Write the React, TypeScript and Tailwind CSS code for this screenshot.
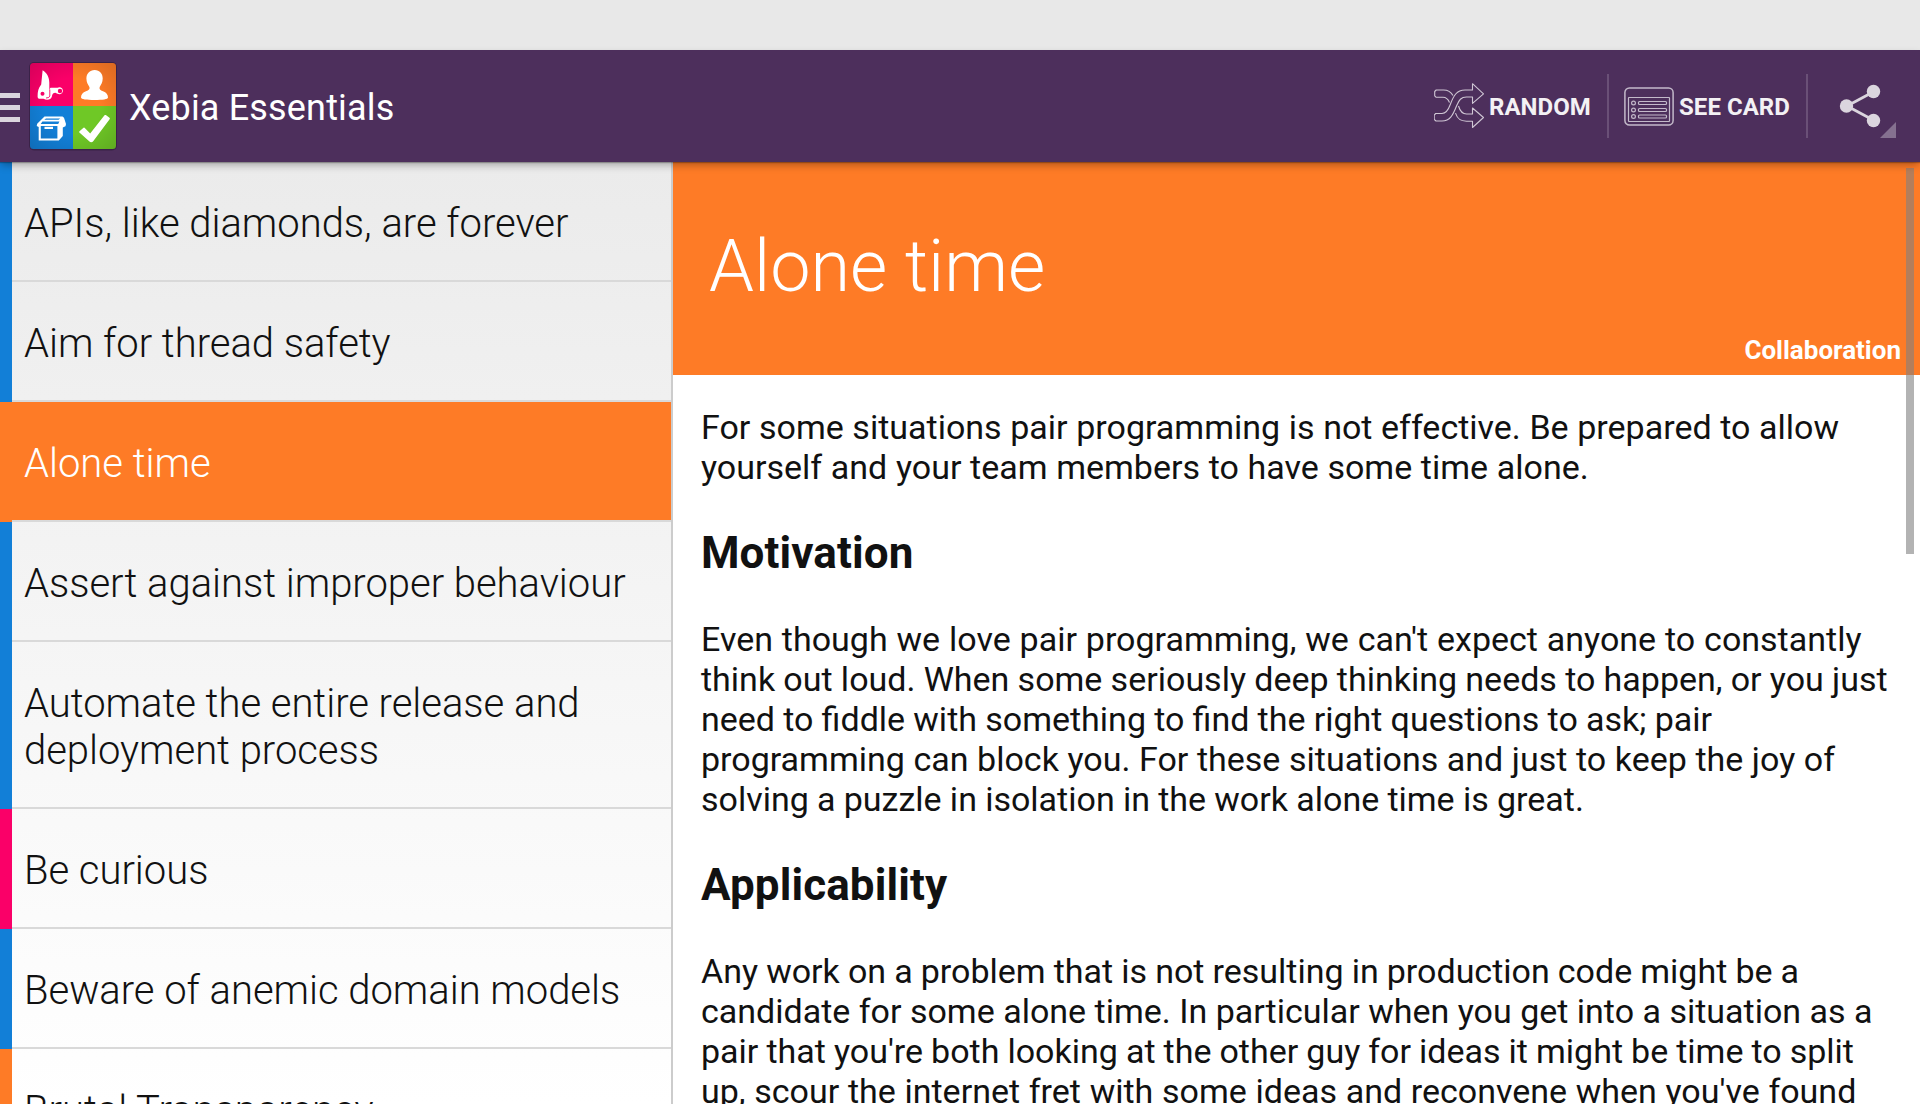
const BLUE = 'bg-[#127fd7]';
const PINK = 'bg-[#fa0068]';
const ORANGE = 'bg-[#fe7b26]';

const ITEMS: { title: string; bar: string; selected?: boolean }[] = [
  { title: 'APIs, like diamonds, are forever', bar: BLUE },
  { title: 'Aim for thread safety', bar: BLUE },
  { title: 'Alone time', bar: ORANGE, selected: true },
  { title: 'Assert against improper behaviour', bar: BLUE },
  { title: 'Automate the entire release and deployment process', bar: BLUE },
  { title: 'Be curious', bar: PINK },
  { title: 'Beware of anemic domain models', bar: BLUE },
  { title: 'Brutal Transparency', bar: ORANGE },
];

function Logo() {
  return (
    <svg className="h-[90px] w-[90px] shrink-0" viewBox="0 0 90 90">
      <defs>
        <clipPath id="tile"><rect x="2" y="2" width="86" height="86" rx="3.5" /></clipPath>
        <radialGradient id="shade" cx="0.5" cy="0.5" r="0.72">
          <stop offset="0.45" stopColor="#000" stopOpacity="0" />
          <stop offset="1" stopColor="#000" stopOpacity="0.15" />
        </radialGradient>
      </defs>
      <rect x="1" y="1" width="88" height="88.5" rx="5" fill="#2f1a3a" opacity="0.6" />
      <g clipPath="url(#tile)">
        <rect x="2" y="2" width="43" height="43" fill="#fa0068" />
        <rect x="45" y="2" width="43" height="43" fill="#fe7b26" />
        <rect x="2" y="45" width="43" height="43" fill="#127fd7" />
        <rect x="45" y="45" width="43" height="43" fill="#6fc826" />
        <rect x="2" y="2" width="86" height="86" fill="url(#shade)" />
      </g>
      <path fill="#fff" fillRule="evenodd" d="M14.6 9.3c4.2 2.3 6.7 7 6.7 12.200v8.300c.5-2.600 1-3 2-3h6.200a3.500 3.500 0 1 1 1 6.300c-1.300-.3-2.200-.9-3-1.300c-2.500.2-3.300 1-3.700 4c-.7 3-5.200 3.600-8.300 1.900H12c-1.600 0-2.400-.7-2.400-2.300c0-5 .7-8.400 3.600-12zM14.500 30.700a2 2 0 1 0 0 4a2 2 0 1 0 0-4zM32 27.800a2.200 2.200 0 1 0 0 4.400a2.200 2.200 0 1 0 0-4.400z" />
      <path fill="none" stroke="#fa0068" strokeWidth="0.900" d="M21.800 28.500v6.500q-.3 2-3.800 2" />
      <path fill="#fff" d="M66.700 9c5 0 8 3.600 8 8.500c0 4.300-1.800 6.300-3 8.500c-.8 2 .5 3.300 3.300 4.300c3.300 1.200 5 3.200 5 6.200c0 1.800-5.400 2.500-13.400 2.500s-13.600-.7-13.600-2.500c0-3 1.700-5 5-6.200c2.800-1 4.200-2.300 3.400-4.300c-1.200-2.200-3-4.200-3-8.500c0-4.900 3.300-8.500 8.300-8.500z" />
      <path
        fill="#fff"
        fillRule="evenodd"
        d="M16.500 55.500h18l1.500 1.200l2 6.300l-.5 2.200l-2.700 1.300v8.500l-4 4.500H10.700v-13.500l-2-1l.5-2.300zM18 57.600l-1.700 1.200h14.200l1.700-1.200zM14.400 60.500l-1.700 2.500h17.500l1.200-2.500zM12.800 65v12.400h16.600v-12.400z"
      />
      <path fill="#fff" d="M16.500 65.800h8.500v2.200h-8.500z" />
      <path fill="#fff" d="M51.500 70.200l4-3.400a1 1 0 0 1 1.300.1l5.400 5.600l14.300-18.200a1 1 0 0 1 1.300-.2l3.700 2.700a1 1 0 0 1 .1 1.400l-16.400 22a2.600 2.600 0 0 1-4 .1l-9.800-8.700a1 1 0 0 1 .1-1.400z" />
    </svg>
  );
}

function ShuffleIcon() {
  return (
    <svg className="h-[46px] w-[50px] shrink-0" viewBox="0 0 50 46" fill="none" stroke="#cfc6d4" strokeWidth="1.1" strokeLinejoin="round">
      <path d="M15.500 19.500c-1.500-3.500-3.500-5.200-6.500-5.200h-6.800l-1.500-1.500v-4.300l1.500-1.500h7.300c4.500 0 7.500 2 9.500 5.500" />
      <path d="M38.500 7v-6.300l11 10.100l-11 9.500v-6.300h-6c-5.500 0-7.500 3-10 9c-3.500 9-6.500 15-14.500 15h-6l-1.800-1.500v-4.500l1.500-1.500h6.300c4.500 0 6.500-4 8.500-9.500c3-8 6-14 14.500-14z" />
      <path d="M24.500 23c1.500 5 4 8 8 8h6v-6l11 9.500l-11 10v-6.300h-6c-6 0-9-2-11-8" />
    </svg>
  );
}

function CardIcon() {
  return (
    <svg className="h-[39px] w-[50px] shrink-0" viewBox="0 0 50 39" fill="none" stroke="#c3b9ca" strokeWidth="1.2">
      <rect x="0.900" y="0.900" width="48.200" height="37.200" rx="4.500" strokeWidth="1.500" />
      <rect x="4.500" y="10.500" width="41" height="24" rx="0.500" />
      {[16, 23, 29.500].map((y) => (
        <g key={y}>
          <circle cx="9.500" cy={y} r="1.900" />
          <rect x="14.500" y={y - 1.500} width="28" height="3" rx="1" />
        </g>
      ))}
    </svg>
  );
}

function ShareIcon() {
  return (
    <svg className="h-[44px] w-[42px]" viewBox="0 0 42 44">
      <path d="M35 7.500L8 22l27 14.500" fill="none" stroke="#dbd5de" strokeWidth="2.800" />
      <circle cx="34.500" cy="7.500" r="6.700" fill="#dbd5de" />
      <circle cx="7.500" cy="22" r="6.700" fill="#dbd5de" />
      <circle cx="34.500" cy="36.500" r="6.700" fill="#dbd5de" />
    </svg>
  );
}

function Divider() {
  return <div className="h-16 w-0.5 shrink-0 bg-[#6a5077]" />;
}

function ActionBar() {
  return (
    <header className="relative z-10 flex h-28 shrink-0 items-center bg-[#4d2f5c] shadow-[0_4px_8px_-1px_rgba(0,0,0,0.3),0_1px_1px_rgba(0,0,0,0.25)]">
      <div className="mt-[3px] flex w-5 flex-col gap-[7px]">
        <div className="h-[5px] bg-[#dbd5de]" />
        <div className="h-[5px] bg-[#dbd5de]" />
        <div className="h-[5px] bg-[#dbd5de]" />
      </div>
      <div className="ml-2"><Logo /></div>
      <h1 className="mt-[3px] ml-[11px] text-[36px] leading-[42px] tracking-[0.17px] whitespace-nowrap text-white">Xebia Essentials</h1>
      <div className="ml-auto flex items-center text-[24px] leading-7 font-bold whitespace-nowrap text-[#f3f1f4]">
        <ShuffleIcon />
        <span className="mt-0.5 ml-[5px] w-[118px] tracking-[0.05px]">RANDOM</span>
        <Divider />
        <div className="ml-[15px]"><CardIcon /></div>
        <span className="mt-0.5 ml-[5px] w-[127px] tracking-[0.05px]">SEE CARD</span>
        <Divider />
        <div className="relative flex h-16 w-28 items-center pl-[31px]">
          <ShareIcon />
          <svg className="absolute right-6 bottom-0 h-4 w-4" viewBox="0 0 16 16">
            <path d="M16 0v16h-16z" fill="#857190" />
          </svg>
        </div>
      </div>
    </header>
  );
}

function Sidebar() {
  return (
    <nav className="flex h-[942px] w-[673px] shrink-0 flex-col overflow-hidden border-r-2 border-[#cccccc] bg-linear-to-b from-[#ebebeb] to-white">
      {ITEMS.map((item) => (
        <div key={item.title} className={`flex shrink-0 ${item.selected ? 'text-white' : 'text-[#111111]'}`}>
          <div className={`w-3 shrink-0 ${item.bar}`} />
          <div className={`flex-1 border-b-2 border-[#d9d9d9] pt-[38px] pr-3 pb-[33px] pl-3 text-[40px] leading-[47px] font-light tracking-[-0.03px] ${item.selected ? 'bg-[#fe7b26]' : ''} bg-clip-padding`}>
            {item.title}
          </div>
        </div>
      ))}
    </nav>
  );
}

function Lines({ lines }: { lines: [string, string][] }) {
  return (
    <p className="text-[34px] leading-10 whitespace-nowrap">
      {lines.map(([text, spacing]) => <span key={text} className={`block ${spacing}`}>{text}</span>)}
    </p>
  );
}

function Detail() {
  return (
    <main className="relative h-[942px] flex-1 overflow-hidden bg-white text-[#111111]">
      <div className="flex h-[213px] flex-col justify-between bg-[#fe7b26] pt-[63px] pr-[19px] pb-[10px] pl-9 text-white">
        <h2 className="text-[72px] leading-[84px] font-light">Alone time</h2>
        <div className="self-end text-[26px] leading-[30px] font-bold">Collaboration</div>
      </div>
      <div className="flex flex-col pt-8 pl-7">
        <Lines lines={[
          ['For some situations pair programming is not effective. Be prepared to allow', '[word-spacing:0.18px]'],
          ['yourself and your team members to have some time alone.', '[word-spacing:0.22px]'],
        ]} />
        <h3 className="my-10 text-[44px] leading-[52px] font-bold tracking-[0.1px]">Motivation</h3>
        <Lines lines={[
          ["Even though we love pair programming, we can't expect anyone to constantly", '[word-spacing:0.45px]'],
          ['think out loud. When some seriously deep thinking needs to happen, or you just', '[word-spacing:-0.19px]'],
          ['need to fiddle with something to find the right questions to ask; pair', '[word-spacing:-0.22px]'],
          ['programming can block you. For these situations and just to keep the joy of', '[word-spacing:0.15px]'],
          ['solving a puzzle in isolation in the work alone time is great.', '[word-spacing:-0.2px]'],
        ]} />
        <h3 className="my-10 text-[44px] leading-[52px] font-bold tracking-[0.1px]">Applicability</h3>
        <Lines lines={[
          ['Any work on a problem that is not resulting in production code might be a', '[word-spacing:-0.35px]'],
          ['candidate for some alone time. In particular when you get into a situation as a', '[word-spacing:0px]'],
          ["pair that you're both looking at the other guy for ideas it might be time to split", '[word-spacing:-0.4px]'],
          ["up, scour the internet fret with some ideas and reconvene when you've found", '[word-spacing:0.25px]'],
        ]} />
      </div>
      <div className="absolute top-[6px] right-[6px] h-[386px] w-2 bg-[#808080]/60" />
    </main>
  );
}

export default function App() {
  return (
    <div className="flex h-[1104px] w-[1920px] flex-col overflow-hidden bg-[#e8e8e8] pt-[50px] font-[Roboto,sans-serif]">
      <ActionBar />
      <div className="flex">
        <Sidebar />
        <Detail />
      </div>
    </div>
  );
}
